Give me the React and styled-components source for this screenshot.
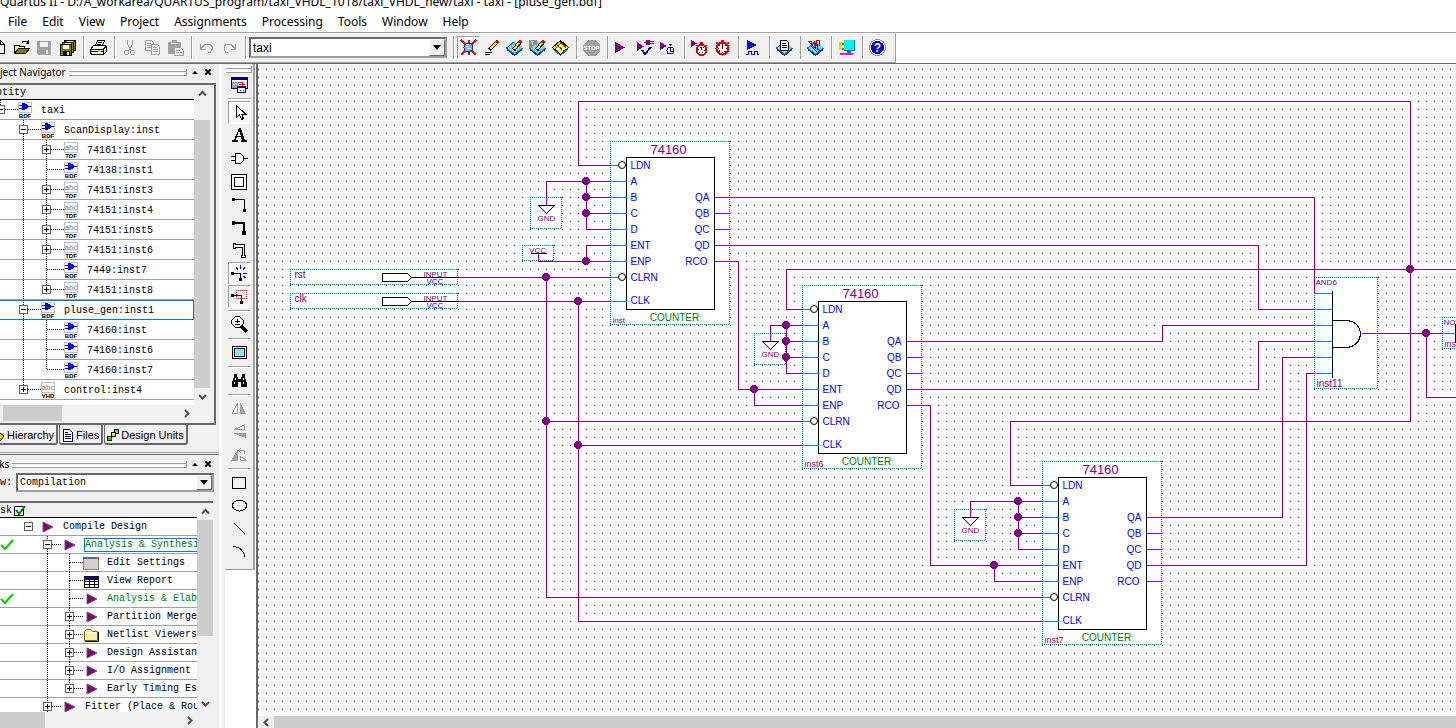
import React from "react";
import styled, { createGlobalStyle, css } from "styled-components";

const GlobalStyle = createGlobalStyle`
  * { box-sizing: border-box; }
  html, body { margin: 0; height: 100%; overflow: hidden; }
  body { background: #fff; color: #000; }
`;

const face = "#f0f0f0";
const shade = "#a0a0a0";
const dark = "#696969";
const thumb = "#cdcdcd";
const wire = "#800080";
const uiFont = '"Noto Sans", "Open Sans", sans-serif';
const arial = '"Liberation Sans", Arial, sans-serif';
const mono = '"Liberation Mono", "Courier New", monospace';

/* The window hangs over the left edge of the screen. */
const Window = styled.div`
  display: flex;
  flex-direction: column;
  height: 100vh;
  width: calc(100% + 24px);
  margin-left: -24px;
  overflow: hidden;
  font: 12px/16px ${uiFont};
`;

const TitleBar = styled.header`
  display: flex;
  align-items: flex-end;
  flex: none;
  height: 9px;
  padding-left: 24px;
  overflow: hidden;
  line-height: 14px;
  white-space: nowrap;
`;

const MenuBar = styled.nav`
  display: flex;
  align-items: center;
  flex: none;
  gap: 1px;
  height: 23px;
  padding: 2px 0 0 9px;
`;

const MenuMark = styled.span`
  width: 15px;
  height: 14px;
  border: 2px solid #000;
`;

const MenuItem = styled.button`
  border: 0;
  padding: 0 7px;
  background: none;
  font: 12px/20px ${uiFont};
  color: #000;
`;

const ToolStrip = styled.div`
  flex: none;
  height: 32px;
  border-top: 1px solid ${shade};
  border-bottom: 1px solid ${dark};
  background: #fff;
`;

const ToolBar = styled.div`
  display: inline-flex;
  align-items: center;
  height: 30px;
  padding: 1px 6px 2px 11px;
  background: ${face};
  border-top: 1px solid #fff;
  border-right: 1px solid ${shade};
  border-bottom: 1px solid ${shade};
  vertical-align: top;
`;

const ToolButton = styled.button`
  display: flex;
  align-items: center;
  justify-content: center;
  flex: none;
  width: 23px;
  height: 23px;
  padding: 0;
  border: 1px solid transparent;
  background: none;
  ${(p) =>
    p.$pressed &&
    css`
      border-color: ${shade} #fff #fff ${shade};
      background: #f8f8f8;
    `}
`;

const ToolSeparator = styled.span`
  flex: none;
  width: 2px;
  height: 23px;
  margin: 0 2px 0 4px;
  background: linear-gradient(90deg, ${shade} 50%, #fff 50%);
`;

const ComboFrame = styled.div`
  display: flex;
  flex: ${(p) => (p.$grow ? "1" : "none")};
  width: ${(p) => (p.$grow ? "auto" : "198px")};
  height: ${(p) => (p.$grow ? "19px" : "21px")};
  margin-right: ${(p) => (p.$grow ? "0" : "2px")};
  border: 2px solid;
  border-color: ${dark} ${shade} ${shade} ${dark};
  background: #fff;
`;

const ComboSelect = styled.select`
  flex: 1;
  min-width: 0;
  appearance: none;
  border: 0;
  padding: 0 0 0 2px;
  background: #fff;
  color: #000;
  font: ${(p) => (p.$mono ? `10px ${mono}` : `12px ${arial}`)};
`;

const ComboArrow = styled.span`
  display: flex;
  align-items: center;
  justify-content: center;
  flex: none;
  width: 16px;
  background: ${face};
  border: 1px solid;
  border-color: #fff ${dark} ${dark} #fff;
`;

const Body = styled.main`
  display: flex;
  flex: 1;
  min-height: 0;
`;

const Dock = styled.aside`
  display: flex;
  flex-direction: column;
  flex: none;
  width: 243px;
  background: ${face};
  overflow: hidden;
`;

const DockPanel = styled.section`
  display: flex;
  flex-direction: column;
  flex: ${(p) => (p.$grow ? "1" : "none")};
  min-height: 0;
`;

const PanelTitle = styled.div`
  display: flex;
  align-items: center;
  flex: none;
  height: 17px;
  padding: 0 6px 1px 8px;
  gap: 3px;
  font: 10px/16px ${uiFont};
  white-space: nowrap;
`;

const Grip = styled.span`
  flex: 1;
  height: 7px;
  border: solid ${shade};
  border-width: 0 1px 1px 0;
  background: linear-gradient(#fff 2px, ${shade} 2px, ${shade} 3px, ${face} 3px, ${face} 4px, #fff 4px);
`;

const TitleButton = styled.button`
  display: flex;
  align-items: center;
  justify-content: center;
  width: 10px;
  height: 12px;
  padding: 0;
  border: 0;
  background: none;
`;

const NavFrame = styled.div`
  flex: none;
  margin: 2px 3px 0 0;
  padding: 0 4px 1px 0;
  background: ${face};
  border: solid ${dark};
  border-width: 2px 2px 2px 0;
`;

const TaskFrame = styled.div`
  display: flex;
  flex-direction: column;
  flex: 1;
  min-height: 0;
  margin: 9px 6px 0 0;
  border-top: 2px solid ${dark};
`;

const ListArea = styled.div`
  display: flex;
  flex: ${(p) => (p.$grow ? "1" : "none")};
  min-height: 0;
`;

const List = styled.div`
  flex: 1;
  min-width: 0;
  overflow: hidden;
  background: #fff;
  padding-bottom: ${(p) => (p.$pad ? "5px" : "0")};
  font: 10px/14px ${mono};
`;

const ListHeader = styled.div`
  display: flex;
  align-items: center;
  gap: 2px;
  height: 15px;
  padding: 1px 0 0 ${(p) => p.$indent}px;
  background: ${face};
  border-bottom: 1px solid #000;
`;

const Row = styled.div`
  display: flex;
  align-items: center;
  height: ${(p) => p.$height}px;
  padding-left: ${(p) => (p.$flush ? "0" : "13px")};
  border-bottom: 1px solid ${shade};
  white-space: nowrap;
  ${(p) =>
    p.$selected &&
    css`
      outline: 1px solid #0078d7;
      outline-offset: -1px;
      border-bottom-color: #0078d7;
    `}
`;

const StatusCell = styled.span`
  display: flex;
  justify-content: flex-end;
  flex: none;
  width: 38px;
`;

const Expander = styled.button`
  display: block;
  flex: none;
  padding: 0;
  border: 0;
  background: none;
`;

const Guide = styled.svg`
  display: block;
  flex: none;
`;

const RowIcon = styled.svg`
  display: block;
  flex: none;
`;

const RowLabel = styled.span`
  margin-left: ${(p) => p.$gap}px;
  padding-top: ${(p) => (p.$low ? "2px" : "0")};
  color: ${(p) => (p.$done ? "#008000" : "#000")};
  ${(p) =>
    p.$focused &&
    css`
      outline: 1px solid #0078d7;
      line-height: 12px;
    `}
`;

const VScroll = styled.div`
  display: flex;
  flex-direction: column;
  flex: none;
  width: 16px;
  background: ${face};
`;

const HScroll = styled.div`
  display: flex;
  flex: none;
  height: ${(p) => p.$height}px;
  background: ${face};
`;

const ScrollButton = styled.button`
  display: flex;
  align-items: center;
  justify-content: center;
  flex: none;
  width: 16px;
  height: 17px;
  max-height: 100%;
  padding: 0;
  border: 0;
  background: none;
`;

const ScrollTrack = styled.div`
  display: flex;
  flex: 1;
  flex-direction: ${(p) => (p.$vertical ? "column" : "row")};
`;

const ScrollThumb = styled.div`
  flex: ${(p) => (p.$size ? `0 0 ${p.$size}` : "1")};
  margin: ${(p) => p.$margin || "0"};
  background: ${thumb};
`;

const Tabs = styled.div`
  display: flex;
  flex: none;
  gap: 1px;
  height: 20px;
  padding-left: 10px;
`;

const Tab = styled.button`
  display: flex;
  align-items: center;
  gap: 2px;
  padding: 2px 2px 0;
  background: ${face};
  border: solid ${dark};
  border-width: 0 2px 2px 1px;
  border-radius: 0 0 3px 3px;
  font: 11px/14px ${arial};
  color: #000;
  white-space: nowrap;
`;

const DockSplit = styled.div`
  flex: none;
  height: 3px;
  margin: 7px 0 1px;
  border-top: 1px solid ${shade};
  border-bottom: 1px solid ${dark};
`;

const FlowRow = styled.label`
  display: flex;
  align-items: center;
  flex: none;
  gap: 4px;
  padding: 0 5px 0 6px;
  font: 10px/14px ${mono};
`;

const PaletteColumn = styled.aside`
  display: flex;
  flex: none;
  flex-direction: column;
  align-items: flex-end;
  width: 37px;
  padding-right: 1px;
  border-left: 3px solid #fff;
  background: linear-gradient(90deg, ${face} 3px, #fff 3px);
`;

const Palette = styled.div`
  display: flex;
  flex-direction: column;
  align-items: center;
  width: 30px;
  padding: 2px 1px 6px;
  background: ${face};
  border-right: 2px solid ${shade};
  border-bottom: 1px solid ${shade};
`;

const PaletteGrip = styled(Grip)`
  flex: none;
  align-self: stretch;
`;

const PaletteSeparator = styled.span`
  flex: none;
  width: 23px;
  height: 5px;
  border: solid ${face};
  border-width: 2px 0 1px;
  background: linear-gradient(${shade} 50%, #fff 50%);
`;

const Editor = styled.section`
  display: flex;
  flex-direction: column;
  flex: 1;
  min-width: 0;
  border-left: 2px solid ${dark};
  background: #fff;
`;

const Sheet = styled.svg`
  display: block;
  flex: 1;
  min-height: 0;
  width: 100%;
`;

const PinText = styled.text`
  font: ${(p) => p.$size}px ${arial};
  fill: ${(p) => p.$color};
  text-anchor: ${(p) => p.$anchor || "start"};
`;

/* ---------- icons, all on a 17 x 17 grid ---------- */

const Chip = () => (
  <>
    <path d="M8.500 2L17 9l-8.500 7.500L0 9z" fill="#60d0f8" />
    <path d="M8.500 2.500l-8 6.500l8 6.500l8-6.500" fill="none" stroke="#0078c8" />
    <path d="M1 10.500l7.500 6l7.500-6" fill="none" stroke="#003070" />
    <path d="M4 8.500h1M6 10.500h1M8 12.500h1M10 10.500h1M12 8.500h1M6 6.500h1M10 6.500h1M8 8.500h1M2 9.500h1M4 10.500h1M6 12.500h1M10 12.500h1" stroke="#fff" />
  </>
);
const Pencil = () => (
  <>
    <path d="M7.500 11l7-8.500" stroke="#000" strokeWidth="4" />
    <path d="M8 10l5.500-6.500" stroke="#ffe800" strokeWidth="2" />
    <path d="M13 4l2-2.500" stroke="#f00000" strokeWidth="3" />
  </>
);
const Watch = ({ cx, cy, r, color }) => (
  <>
    <path d={`M${cx} ${cy - r - 2}v2M${cx - 1.5} ${cy - r - 2}h3M${cx - r} ${cy - r}l1 1M${cx + r} ${cy - r}l-1 1`} stroke={color} strokeWidth="2" />
    <circle cx={cx} cy={cy} r={r} fill="#fff" stroke={color} strokeWidth="2" />
    <circle cx={cx} cy={cy} r={r - 2} fill="none" stroke="#000" strokeDasharray="1 2" />
    <path d={`M${cx} ${cy - r + 2}v${r - 2}`} fill="none" stroke="#000" />
  </>
);

const icons = {
  new: <path d="M4.500 1.500h6l4 4v9h-10zM10.500 1.500v4h4" fill="#fff" stroke="#000" />,
  open: (
    <>
      <path d="M1.500 14v-8h4l1 1h5v3" fill="#ffff90" stroke="#000" />
      <path d="M1.500 14.500l4-5h11l-4 5z" fill="#808000" stroke="#000" />
      <path d="M9 3.500l2-1.500h3l1 2M15.500 1v4M12.500 4.500h3" fill="none" stroke="#000" />
    </>
  ),
  save: (
    <>
      <path d="M1 2h14v14H2l-1-1z" fill={shade} />
      <path d="M4 3h8v5H4zM10 11h2v4h-2z" fill={face} />
      <path d="M15.500 3v13.500H2" fill="none" stroke="#fff" />
    </>
  ),
  saveAll: (
    <>
      <path d="M5.500 1.500h11v10h-11z" fill="#808000" stroke="#000" />
      <path d="M7.500 2h6v3h-6z" fill="#fff" />
      <path d="M3.500 3.500h11v10h-11z" fill="#808000" stroke="#000" />
      <path d="M5.500 4h6v3h-6z" fill="#fff" />
      <path d="M1.500 5.500h11v11h-11z" fill="#808000" stroke="#000" />
      <path d="M4 6h6v4H4z" fill="#fff" />
      <path d="M4 12h7v4H4z" fill="#000" />
      <path d="M8 13h2v3H8z" fill="#fff" />
    </>
  ),
  print: (
    <>
      <path d="M5.500 6.500l2-5h7l-2 5" fill="#fff" stroke="#000" />
      <path d="M8 3.500h4M7 5.500h4" stroke="#000" />
      <path d="M3.500 6.500h11l2 1v5l-3 3h-11l-2-1v-4z" fill="#fff" stroke="#000" />
      <path d="M1 10.500h12l3-3M13.500 10v5M1 12.500h12" fill="none" stroke="#000" />
      <path d="M8 12h3" stroke="#e0e000" strokeWidth="2" />
    </>
  ),
  cut: (
    <g fill="none" stroke={shade} strokeWidth="1">
      <path d="M6.500 1v4l4 7M11.500 1v4l-4 7" />
      <circle cx="5.500" cy="13.500" r="2" />
      <circle cx="11.500" cy="13.500" r="2" />
    </g>
  ),
  copy: (
    <g fill={face} stroke={shade}>
      <path d="M1.500 1.500h6l2 2v8h-8zM3 4.500h4M3 6.500h4M3 8.500h4" />
      <path d="M7.500 5.500h6l2 2v8h-8zM9 8.500h4M9 10.500h5M9 12.500h5" />
    </g>
  ),
  paste: (
    <>
      <path d="M1 3h4V1h5v2h4v12H1z" fill={shade} />
      <path d="M4 4.500h7" stroke={face} />
      <path d="M7.500 8.500h6l3 3v5h-9zM9 11.500h4M9 13.500h6" fill={face} stroke={shade} />
    </>
  ),
  undo: <path d="M2.500 5v5h5M3 9.500l4-4h5l2 2v3l-2 3h-2" fill="none" stroke={shade} />,
  redo: <path d="M14.500 5v5h-5M14 9.500l-4-4h-5l-2 2v3l2 3h2" fill="none" stroke={shade} />,
  settings: (
    <>
      <path d="M1 1l15 15M16 1L1 16M8.500 1v4M8.500 12v4" stroke="#f00" strokeWidth="2" />
      <circle cx="8.500" cy="8.500" r="4.500" fill="#60b8f0" stroke="#003080" />
      <path d="M6 7.500h3M7 9.500h4M6 5.500h3" stroke="#c8f4ff" />
    </>
  ),
  edit: (
    <>
      <path d="M6 11l8-8" stroke="#000" strokeWidth="4" />
      <path d="M7 10l6-6" stroke="#ffe800" strokeWidth="2" />
      <path d="M13 4l2-2" stroke="#e00000" strokeWidth="3" />
      <path d="M2 13.500h7M2 15.500h5" stroke="#000" />
    </>
  ),
  chipEdit: (<><Chip /><Pencil /></>),
  chipPins: (<><Chip /><path d="M0 1h8v5H4v3H0z" fill="#909090" /><path d="M2 2.500h3M3.500 2v4" stroke="#e0e0e0" /><Pencil /></>),
  chipPlan: (
    <>
      <path d="M8.500 1.500l8 7l-8 7l-8-7z" fill="#ffee00" stroke="#000" />
      <path d="M4.500 5.500l8 7M8 2.500l6 6M3 10l7-7" stroke="#404000" />
      <path d="M7 6h3v2H7zM4 9h3v2H4zM10 9h3v2h-3z" fill="#fff" />
      <path d="M1 10l7.500 6.500l7.500-6.500" fill="none" stroke="#0078c8" />
    </>
  ),
  stop: (
    <>
      <path d="M5 1h7l5 5v6l-5 5H5l-5-5V6z" fill={shade} />
      <text x="8.500" y="11" textAnchor="middle" fontSize="6" fontFamily="Liberation Sans" fontWeight="bold" fill="#fff">STOP</text>
    </>
  ),
  play: <path d="M1 3v11l10-5.500z" fill={wire} />,
  playCheck: (
    <>
      <path d="M0 3v9l7-4.500zM7 3h2V1h4v1h4v1h-4v1h4v1h-4v1H9V4H7z" fill={wire} />
      <path d="M5 11l3 4l6-7" fill="none" stroke="#000080" strokeWidth="2" />
    </>
  ),
  playClock: (
    <>
      <path d="M0 3v8l7-4z" fill={wire} />
      <path d="M10.500 5v2M9 5.500h3" stroke="#000080" />
      <circle cx="10.500" cy="11.500" r="3.500" fill="#fff" stroke="#000080" />
      <path d="M10.500 9v3h2" fill="none" stroke="#000080" />
    </>
  ),
  timeRun: (<><Watch cx={10.5} cy={11} r={5} color="#e00000" /><path d="M0 1v7l6-3.500z" fill={wire} /></>),
  time: <Watch cx={8.5} cy={9.5} r={6} color="#e00000" />,
  simulate: (
    <>
      <path d="M2 1v10l10-5z" fill="#0000ff" />
      <path d="M1 15.500h2.500v-3h3v3h3v-3h3v3H14" fill="none" stroke="#0000ff" />
    </>
  ),
  report: (<><Chip /><path d="M4.500 1.500h6l2 2v8h-8z" fill="#fff" stroke="#000" /><path d="M6 4.500h4M6 6.500h5M6 8.500h5" stroke="#000" /></>),
  wave: (<><Chip /><path d="M1 2.500h3v5M7 1.500v5h2v-5h3v5" fill="none" stroke="#d00000" /><path d="M2 3l6 6v-5M4 7l6 6M10 5v5l4 2" fill="none" stroke="#0000c0" /></>),
  programmer: (
    <>
      <path d="M4 4.500h3M4 9.500h3" stroke="#808000" strokeWidth="2" />
      <path d="M1 3h3v8H1z" fill="#e8d800" />
      <path d="M6 1h10v10H6z" fill="#00f0f8" />
      <path d="M16.500 1v10.500H6" fill="none" stroke="#008080" />
      <path d="M9 11h4v3H9z" fill="#008080" />
      <path d="M2 14h13v2H2z" fill="#ff00ff" />
    </>
  ),
  help: (
    <>
      <circle cx="8.500" cy="8.500" r="8" fill="#fff" stroke="#909090" />
      <circle cx="8.500" cy="8.500" r="6.500" fill="#0000d0" />
      <text x="8.500" y="13" textAnchor="middle" fontSize="12" fontFamily="Liberation Sans" fontWeight="bold" fill="#fff">?</text>
    </>
  ),
  detach: (
    <>
      <path d="M.5 1.500h16v11H.5z" fill="#fff" stroke="#000080" />
      <path d="M1 2.500h15" stroke="#000080" strokeWidth="2" />
      <path d="M1 6h6v6H1z" fill={shade} />
      <path d="M2 8.500h2M5 8.500h1" stroke="#fff" />
      <path d="M7 6.500h4v4M8 8.500h6M11 10.500h1" fill="none" stroke="#f00" />
      <path d="M6.500 10.500h8v6h-8z" fill="#fff" stroke="#000080" />
      <path d="M7 11.500h7M9 14.500h1M12 14.500h1" stroke="#000080" />
    </>
  ),
  select: <path d="M5.500 1.500v12l3-3l2 5l2-1l-2-4.500h4z" fill="#fff" stroke="#000" />,
  text: <path d="M8 1h2l4 12h2v2h-6v-2h1l-1-3H6l-1 3h2v2H1v-2h2zM8 4l-2 5h4z" fill="#000" fillRule="evenodd" />,
  gate: <path d="M4.500 3.500h5l3 3v4l-3 3h-5zM0 6.500h4M0 10.500h4M13 8.500h4" fill="#fff" stroke="#000" />,
  block: <path d="M.5 1.500h15v15H.5zM3.500 4.500h9v9h-9z" fill="#fff" stroke="#000" />,
  node: (<><path d="M2 3.500h11.500V14" fill="none" stroke="#000" /><path d="M1 2h3v3H1zM12 13h3v3h-3z" /></>),
  bus: (<><path d="M2 3.500h11V14" fill="none" stroke="#000" strokeWidth="2" /><path d="M1 2h3v4H1zM11 12h4v4h-4z" /></>),
  conduit: <path d="M2.500 1.500h2v1h9v11h1v2h-4v-2h1v-8h-7v1h-2z" fill="#fff" stroke="#000" />,
  rubber: (
    <>
      <path d="M1 8.500h8.500V14" fill="none" stroke="#000" />
      <path d="M0 7h3v3H0zM8 13h3v3H8z" />
      <path d="M5 2l2 3M9.500 0v4M14 2l-2 3M12 8.500h4M12 11l3 2" stroke="#0000ff" fill="none" />
    </>
  ),
  partial: (
    <>
      <path d="M1 7.500h9.500V14" fill="none" stroke="#000" />
      <path d="M0 6h3v3H0zM9 13h3v3H9z" />
      <path d="M7 7.500h3.500V11" fill="none" stroke="#0000ff" />
      <path d="M5.500 2v9M5 2.500h11M15.500 2v9M5 10.500h11" fill="none" stroke="#f00" strokeDasharray="1 1" />
    </>
  ),
  zoom: (
    <>
      <path d="M4.500 .5h4l4 4v3l-4 4h-4l-4-4v-3z" fill="#fff" stroke="#000" />
      <path d="M6.500 3v4M4 5.500h5M4 8.500h5" stroke="#000" />
      <path d="M10 10l6 6" stroke="#000" strokeWidth="3" />
    </>
  ),
  fullScreen: (
    <>
      <rect x="1.500" y="2.500" width="14" height="12" rx="1" fill={face} stroke="#000" />
      <rect x="3.500" y="4.500" width="10" height="8" fill="#7fdce8" stroke="#000" />
      <path d="M4 5.500h9M4 7.500h9M4 9.500h9M4 11.500h9" stroke="#e8ffff" strokeDasharray="1 1" />
    </>
  ),
  find: (
    <>
      <path d="M3 2h3v3h1v2h3V5h1V2h3v3l2 6v4h-6v-5H7v5H1v-4l2-6z" fill="#000" />
      <path d="M4.500 6l-1.500 6M12.500 6v6" stroke="#fff" strokeDasharray="2 2" />
    </>
  ),
  flipH: (<><path d="M9 2v12h6z" fill={shade} /><path d="M6.500 3v10.500h-5z" fill="#fff" stroke={shade} /></>),
  flipV: (<><path d="M2 10h13v5z" fill={shade} /><path d="M13.500 2v4.500h-10z" fill="#fff" stroke={shade} /></>),
  rotate: (
    <>
      <path d="M7 3v12H0z" fill={shade} />
      <path d="M9.500 14.500v-4l6 4z" fill="#fff" stroke={shade} />
      <path d="M8 4.500h5l1 3M10 2L8 4.500L10 7" fill="none" stroke={shade} />
    </>
  ),
  rectangle: <rect x="1.500" y="3.500" width="13" height="11" fill="none" stroke="#000" />,
  oval: <ellipse cx="8.500" cy="8.500" rx="7" ry="5.500" fill="none" stroke="#000" />,
  line: <path d="M3 3l11 11" stroke="#000" />,
  arc: <path d="M2 3.500q9 0 12 10" fill="none" stroke="#000" />,
};

const Icon = ({ name }) => (
  <svg width="17" height="17" viewBox="0 0 17 17" shapeRendering="crispEdges" aria-hidden="true">
    {icons[name]}
  </svg>
);

const DownTriangle = () => (
  <svg width="8" height="5" viewBox="0 0 8 5" aria-hidden="true">
    <path d="M0 0h8L4 5z" fill="#000" />
  </svg>
);

const chevrons = { up: "M1 6.500L4.500 3L8 6.500", down: "M1 3L4.500 6.500L8 3", left: "M6 1L2.500 4.500L6 8", right: "M3 1L6.500 4.500L3 8" };
const Chevron = ({ dir }) => (
  <ScrollButton aria-label={`Scroll ${dir}`}>
    <svg width="9" height="9" viewBox="0 0 9 9" aria-hidden="true">
      <path d={chevrons[dir]} fill="none" stroke="#505050" strokeWidth="2" />
    </svg>
  </ScrollButton>
);

function Combo({ label, options, useMono, grow }) {
  return (
    <ComboFrame $grow={grow}>
      <ComboSelect aria-label={label} $mono={useMono} defaultValue={options[0]}>
        {options.map((o) => <option key={o}>{o}</option>)}
      </ComboSelect>
      <ComboArrow><DownTriangle /></ComboArrow>
    </ComboFrame>
  );
}

function ToolGroup({ names, pressed = [] }) {
  return names.map((n, i) =>
    n === "|" ? <ToolSeparator key={i} /> : (
      <ToolButton key={i} aria-label={n} $pressed={pressed.includes(n)}><Icon name={n} /></ToolButton>
    )
  );
}

function Title({ children }) {
  return (
    <PanelTitle>
      {children}
      <Grip />
      <TitleButton aria-label="Collapse">
        <svg width="6" height="3" viewBox="0 0 6 3"><path d="M0 3h6L3 0z" /></svg>
      </TitleButton>
      <TitleButton aria-label="Close">
        <svg width="6" height="6" viewBox="0 0 6 6"><path d="M0 0l6 6M6 0L0 6" stroke="#000" strokeWidth="2" /></svg>
      </TitleButton>
    </PanelTitle>
  );
}

/* One tree column: with "pass" a line runs through it, otherwise it stays empty. */
function Blank({ w, h, pass }) {
  return (
    <Guide width={w} height={h} shapeRendering="crispEdges" aria-hidden="true">
      {pass && <path d={`M11.500 0V${h}`} stroke="#000" strokeDasharray="1 1" />}
    </Guide>
  );
}

function Branch({ w, h, sign, up, down, root, label }) {
  const cx = root ? 14.5 : 11.5;
  const cy = Math.floor(h / 2) - 0.5;
  const art = (
    <Guide width={w} height={h} shapeRendering="crispEdges" aria-hidden="true">
      <g stroke="#000" strokeDasharray="1 1">
        {up && <path d={`M${cx} 0V${cy}`} />}
        {down && <path d={`M${cx} ${cy + 0.5}V${h}`} />}
        {!root && <path d={`M${cx + 0.5} ${cy}H${w}`} />}
      </g>
      {sign && (
        <>
          <rect x={cx - 4} y={cy - 4} width="8" height="8" fill="#fff" stroke="#606060" />
          <path d={`M${cx - 2.5} ${cy}h5${sign === "+" ? `M${cx} ${cy - 2.5}v5` : ""}`} stroke="#000" />
        </>
      )}
    </Guide>
  );
  return sign ? <Expander aria-label={`Toggle ${label}`}>{art}</Expander> : art;
}

function EntityIcon({ kind }) {
  return (
    <RowIcon width="14" height="19" viewBox="0 0 14 19" shapeRendering="crispEdges">
      <rect x=".5" y="2.500" width="13" height="10" fill="#fff" stroke="#c0c0c0" />
      {kind === "BDF" ? (
        <path d="M4 3h3v1h2v1h1v1h3v1h-3v1H9v1H7v1H4V9H1V8h3V6H1V5h3z" fill="#0000ff" />
      ) : (
        <text x="7" y="10" textAnchor="middle" fontSize="8" fontFamily="Liberation Sans" fill="#808080">abc</text>
      )}
      <text x="7" y="18" textAnchor="middle" fontSize="6" fontFamily="Liberation Sans" fontWeight="bold" fill="#000">{kind}</text>
    </RowIcon>
  );
}

const entities = [
  { level: 0, name: "taxi", kind: "BDF", sign: "-" },
  { level: 1, name: "ScanDisplay:inst", kind: "BDF", sign: "-" },
  { level: 2, name: "74161:inst", kind: "TDF", sign: "+" },
  { level: 2, name: "74138:inst1", kind: "BDF" },
  { level: 2, name: "74151:inst3", kind: "TDF", sign: "+" },
  { level: 2, name: "74151:inst4", kind: "TDF", sign: "+" },
  { level: 2, name: "74151:inst5", kind: "TDF", sign: "+" },
  { level: 2, name: "74151:inst6", kind: "TDF", sign: "+" },
  { level: 2, name: "7449:inst7", kind: "BDF" },
  { level: 2, name: "74151:inst8", kind: "TDF", sign: "+", last: true },
  { level: 1, name: "pluse_gen:inst1", kind: "BDF", sign: "-", selected: true },
  { level: 2, name: "74160:inst", kind: "BDF" },
  { level: 2, name: "74160:inst6", kind: "BDF" },
  { level: 2, name: "74160:inst7", kind: "BDF", last: true },
  { level: 1, name: "control:inst4", kind: "VHD", sign: "+", last: true },
];

function EntityRow({ item }) {
  return (
    <Row $height={20} $selected={item.selected}>
      {item.level > 0 && <Blank w={23} h={20} />}
      {item.level > 1 && <Blank w={23} h={20} pass />}
      <Branch w={29} h={20} sign={item.sign} up down={item.level > 0 && !item.last} label={item.name} />
      <EntityIcon kind={item.kind} />
      <RowLabel $gap={9} $low>{item.name}</RowLabel>
    </Row>
  );
}

const taskArt = {
  run: <path d="M4 3v10l10-5z" fill={wire} stroke="#606060" strokeWidth="1" />,
  form: (
    <>
      <path d="M.5 2.500h15v12H.5z" fill="#d4d0c8" stroke="#808080" />
      <path d="M0 2h16v2H0z" fill="#3a6ea5" /><path d="M12 2h3v2h-3z" fill="#f04020" />
    </>
  ),
  table: (
    <>
      <path d="M1 3h15v12H1z" fill="#000" />
      <path d="M2 4h4v2H2zM7 4h4v2H7zM12 4h3v2h-3z" fill="#0000c0" />
      <path d="M2 7h4v1H2zM7 7h4v1H7zM12 7h3v1h-3zM2 9h4v2H2zM7 9h4v2H7zM12 9h3v2h-3zM2 12h4v2H2zM7 12h4v2H7zM12 12h3v2h-3z" fill="#fff" />
    </>
  ),
  folder: (
    <>
      <path d="M1.500 13.500v-9l2-2h4l2 2h5v9z" fill="#ffefa0" stroke="#806000" />
      <path d="M2 14.500h13.500V5" fill="none" stroke="#000" />
      <path d="M3 6h10" stroke="#fffbe0" strokeWidth="2" />
    </>
  ),
};

const tasks = [
  { level: 0, name: "Compile Design", icon: "run", sign: "-" },
  { level: 1, name: "Analysis & Synthesis", icon: "run", sign: "-", done: true, focused: true },
  { level: 2, name: "Edit Settings", icon: "form" },
  { level: 2, name: "View Report", icon: "table" },
  { level: 2, name: "Analysis & Elaboration", icon: "run", done: true },
  { level: 2, name: "Partition Merge", icon: "run", sign: "+" },
  { level: 2, name: "Netlist Viewers", icon: "folder", sign: "+" },
  { level: 2, name: "Design Assistant", icon: "run", sign: "+" },
  { level: 2, name: "I/O Assignment", icon: "run", sign: "+" },
  { level: 2, name: "Early Timing Estimate", icon: "run", sign: "+", last: true },
  { level: 1, name: "Fitter (Place & Route)", icon: "run", sign: "+" },
];

function TaskRow({ item }) {
  return (
    <Row $height={18} $flush>
      <StatusCell>
        {item.done && (
          <svg width="14" height="12" viewBox="0 0 14 12"><path d="M1 6l4 4L13 1" fill="none" stroke="#00d000" strokeWidth="2" /></svg>
        )}
      </StatusCell>
      {item.level > 0 && <Blank w={22} h={18} />}
      {item.level > 1 && <Blank w={22} h={18} pass />}
      <Branch w={25} h={18} sign={item.sign} up={item.level > 0} down={item.level > 0 && !item.last} root={item.level === 0} label={item.name} />
      <RowIcon width="16" height="16" viewBox="0 0 16 16">{taskArt[item.icon]}</RowIcon>
      <RowLabel $gap={8} $done={item.done} $focused={item.focused}>{item.name}</RowLabel>
    </Row>
  );
}

/* ---------- schematic ---------- */

const inPins = [["LDN", 24], ["A", 40], ["B", 56], ["C", 72], ["D", 88], ["ENT", 104], ["ENP", 120], ["CLRN", 136], ["CLK", 160]];
const outPins = [["QA", 56], ["QB", 72], ["QC", 88], ["QD", 104], ["RCO", 120]];
const blue = "#0000ff";

/* Each side is its own path so that the dots fall on whole pixels. */
function Bounds({ w, h }) {
  return (
    <>
      <rect width={w} height={h} fill="#fff" />
      <path
        transform="translate(-.5 -.5)"
        d={`M0 .5H${w}M0 ${h + 0.5}H${w}M.5 0V${h}M${w + 0.5} 0V${h}`}
        stroke="#008080"
        strokeDasharray="1 1"
      />
    </>
  );
}

function Counter({ x, y, name }) {
  return (
    <g transform={`translate(${x} ${y})`}>
      <Bounds w={119} h={183} />
      <rect x="16" y="16" width="88" height="152" fill="#fff" stroke="#000" />
      {inPins.map(([n, py]) => {
        const inverted = n === "LDN" || n === "CLRN";
        return (
          <g key={n}>
            <path d={`M0 ${py}H${inverted ? 8 : 16}`} stroke="#0080ff" />
            {inverted && <circle cx="11.500" cy={py - 0.5} r="3.500" fill="#fff" stroke="#000" shapeRendering="auto" />}
            <PinText $size={10} $color={blue} x="20" y={n === "CLK" ? py + 2 : py + 3}>{n}</PinText>
          </g>
        );
      })}
      {outPins.map(([n, py]) => (
        <g key={n}>
          <path d={`M104 ${py}h16`} stroke="#8000ff" />
          <PinText $size={10} $color={blue} $anchor="end" x={n === "RCO" ? 97 : 99} y={py + 3}>{n}</PinText>
        </g>
      ))}
      <PinText $size={13} $color={wire} $anchor="middle" x="58" y="12">74160</PinText>
      <PinText $size={10} $color="#008000" $anchor="middle" x="64" y="179">COUNTER</PinText>
      <PinText $size={name === "inst" ? 8 : 9} $color={wire} x="2" y="181">{name}</PinText>
    </g>
  );
}

function Ground({ x, y }) {
  return (
    <g transform={`translate(${x} ${y})`}>
      <Bounds w={31} h={31} />
      <path d="M16 0v8" stroke="#8000ff" />
      <path d="M8 8h16l-8 8z" fill="#fff" stroke="#000" />
      <PinText $size={8} $color={wire} $anchor="middle" x="16" y="23">GND</PinText>
    </g>
  );
}

function InputPin({ y, name }) {
  return (
    <g transform={`translate(290 ${y})`}>
      <Bounds w={167} h={15} />
      <path d="M92 4h25l4 4l-4 4H92zM121 8h47" fill="#fff" stroke="#000" />
      <PinText $size={10} $color={wire} x="4" y="8">{name}</PinText>
      <PinText $size={8} $color={wire} x="133" y="7">INPUT</PinText>
      <PinText $size={8} $color={blue} x="136" y="14">VCC</PinText>
    </g>
  );
}

const wires = [
  "M610 165H578V101H1410V421H1010V485H1042",
  "M802 309H786V269H1460",
  "M546 197V181H610M610 229H586V181M586 197H610M586 213H610",
  "M770 333V325H802M802 373H786V325M786 341H802M786 357H802",
  "M970 509V501H1042M1042 549H1018V501M1018 517H1042M1018 533H1042",
  "M538 261H610M586 261V245H610",
  "M458 277H610M546 277V597H1042M546 421H802",
  "M458 301H610M578 301V621H1042M578 445H802",
  "M730 261H738V389H802M754 389V405H802",
  "M730 197H1314V293",
  "M730 245H1258V309H1314",
  "M922 341H1162V325H1314",
  "M922 389H1258V341H1314",
  "M922 405H930V565H1042M994 565V581H1042",
  "M1162 517H1282V357H1314",
  "M1162 565H1306V373H1314",
  "M1378 333H1442M1426 333V397H1460",
];

const junctions = [
  [586, 181], [586, 197], [586, 213], [586, 261], [546, 277], [578, 301], [546, 421], [578, 445],
  [786, 325], [786, 341], [786, 357], [754, 389], [994, 565], [1018, 501], [1018, 517], [1018, 533],
  [1410, 269], [1426, 333],
];

function Schematic() {
  return (
    <Sheet aria-label="pluse_gen.bdf">
      <defs>
        <pattern id="grid" width="8" height="8" patternUnits="userSpaceOnUse">
          <rect x="0" y="5" width="1" height="1" fill="#000" />
        </pattern>
      </defs>
      <rect width="100%" height="100%" fill="url(#grid)" />
      {/* scroll offset of the sheet inside the editor */}
      <g transform="translate(-257.500 -63.500)" fill="none" shapeRendering="crispEdges">
        <Counter x={610} y={141} name="inst" />
        <Counter x={802} y={285} name="inst6" />
        <Counter x={1042} y={461} name="inst7" />
        <Ground x={530} y={197} />
        <Ground x={754} y={333} />
        <Ground x={954} y={509} />
        <g transform="translate(522 245)">
          <Bounds w={31} h={15} />
          <path d="M8 8h16" stroke="#000" />
          <path d="M16 8v8" stroke="#8000ff" />
          <PinText $size={8} $color={wire} $anchor="middle" x="15" y="7">VCC</PinText>
        </g>
        <InputPin y={269} name="rst" />
        <InputPin y={293} name="clk" />
        <g transform="translate(1314 277)">
          <Bounds w={63} h={111} />
          <path d="M0 16h18M0 32h18M0 48h18M0 64h18M0 80h18M0 96h18" stroke="#0080ff" />
          <path d="M47 56h17" stroke="#8000ff" />
          <path d="M18 13v87M18 43h15q12 2 13 13q-1 12-13 14H18" stroke="#000" />
          <PinText $size={8} $color={wire} x="1" y="7">AND6</PinText>
          <PinText $size={10} $color={wire} x="2" y="109">inst11</PinText>
        </g>
        <g transform="translate(1442 317)">
          <Bounds w={47} h={31} />
          <path d="M0 16h12" stroke="#0080ff" />
          <path d="M13 7v18l16-9z" stroke="#000" />
          <PinText $size={8} $color={wire} x="1" y="7">NOT</PinText>
          <PinText $size={9} $color={wire} x="2" y="29">inst12</PinText>
        </g>
        <g stroke={wire}>{wires.map((d) => <path key={d} d={d} />)}</g>
        <g fill={wire}>{junctions.map(([x, y]) => <circle key={`${x}-${y}`} cx={x - 0.5} cy={y - 0.5} r="4" />)}</g>
      </g>
    </Sheet>
  );
}

const menus = ["File", "Edit", "View", "Project", "Assignments", "Processing", "Tools", "Window", "Help"];
const paletteTools = [
  "detach", "|", "select", "text", "gate", "block", "node", "bus", "conduit", "rubber", "partial", "|", "zoom", "|",
  "fullScreen", "|", "find", "|", "flipH", "flipV", "rotate", "|", "rectangle", "oval", "line", "arc",
];
const pressedTools = ["select", "rubber", "partial"];

export default function App() {
  return (
    <>
      <GlobalStyle />
      <Window>
        <TitleBar>Quartus II - D:/A_workarea/QUARTUS_program/taxi_VHDL_1018/taxi_VHDL_new/taxi - taxi - [pluse_gen.bdf]</TitleBar>
        <MenuBar>
          <MenuMark />
          {menus.map((m) => <MenuItem key={m}>{m}</MenuItem>)}
        </MenuBar>
        <ToolStrip>
          <ToolBar>
            <ToolGroup names={["new", "open", "save", "saveAll", "|", "print", "|", "cut", "copy", "paste", "|", "undo", "redo", "|"]} />
            <Combo label="Project" options={["taxi"]} />
            <ToolGroup
              names={["|", "settings", "edit", "chipEdit", "chipPins", "chipPlan", "|", "stop", "|", "play", "playCheck", "playClock", "|", "timeRun", "time", "|", "simulate", "|", "report", "|", "wave", "|", "programmer", "|", "help"]}
              pressed={["settings"]}
            />
          </ToolBar>
        </ToolStrip>
        <Body>
          <Dock>
            <DockPanel>
              <Title>Project Navigator</Title>
              <NavFrame>
                <ListArea>
                  <List $pad>
                    <ListHeader $indent={14}>Entity</ListHeader>
                    {entities.map((e) => <EntityRow key={`${e.level}${e.name}`} item={e} />)}
                  </List>
                  <VScroll>
                    <Chevron dir="up" />
                    <ScrollTrack $vertical><ScrollThumb $margin="18px 0 0" /></ScrollTrack>
                    <Chevron dir="down" />
                  </VScroll>
                </ListArea>
                <HScroll $height={17}>
                  <Chevron dir="left" />
                  <ScrollTrack><ScrollThumb $size="59px" $margin="0 0 1px 11px" /></ScrollTrack>
                  <Chevron dir="right" />
                  <VScroll />
                </HScroll>
              </NavFrame>
              <Tabs role="tablist">
                <Tab role="tab" aria-selected="true">
                  <svg width="16" height="14" viewBox="0 0 16 14"><path d="M3 7l4-5l4 3l4 3l-4 5l-5-2z" fill="#f0d800" stroke="#000" /></svg>
                  Hierarchy
                </Tab>
                <Tab role="tab" aria-selected="false">
                  <svg width="12" height="13" viewBox="0 0 12 13" shapeRendering="crispEdges">
                    <path d="M1.500 .5h6l3 3v9h-9z" fill="#fff" stroke="#000060" />
                    <path d="M3 3.500h3M3 5.500h6M3 7.500h6M3 9.500h6" stroke="#000060" />
                  </svg>
                  Files
                </Tab>
                <Tab role="tab" aria-selected="false">
                  <svg width="12" height="12" viewBox="0 0 12 12" shapeRendering="crispEdges">
                    <path d="M7.500 .5h4v4h-4z" fill="#00f0ff" stroke="#000" />
                    <path d="M4.500 3.500h4v4h-4z" fill="#ffee00" stroke="#000" />
                    <path d="M.5 7.500h4v4h-4z" fill="#00e000" stroke="#000" />
                  </svg>
                  Design Units
                </Tab>
              </Tabs>
            </DockPanel>
            <DockSplit />
            <DockPanel $grow>
              <Title>Tasks</Title>
              <FlowRow>
                Flow:
                <Combo label="Flow" options={["Compilation"]} useMono grow />
              </FlowRow>
              <TaskFrame>
                <ListArea $grow>
                  <List>
                    <ListHeader $indent={12}>
                      Task
                      <svg width="12" height="12" viewBox="0 0 12 12">
                        <path d="M.5 1.500h9v9h-9z" fill="#fff" stroke="#000" />
                        <path d="M2 5l3 4L11 1" fill="none" stroke="#008000" strokeWidth="2" />
                      </svg>
                    </ListHeader>
                    {tasks.map((t) => <TaskRow key={t.name} item={t} />)}
                  </List>
                  <VScroll>
                    <Chevron dir="up" />
                    <ScrollTrack $vertical><ScrollThumb $size="66%" /></ScrollTrack>
                    <Chevron dir="down" />
                  </VScroll>
                </ListArea>
                <HScroll $height={16}>
                  <Chevron dir="left" />
                  <ScrollTrack><ScrollThumb $size="53px" /></ScrollTrack>
                  <Chevron dir="right" />
                  <VScroll />
                </HScroll>
              </TaskFrame>
            </DockPanel>
          </Dock>
          <PaletteColumn>
            <Palette>
              <PaletteGrip />
              {paletteTools.map((n, i) =>
                n === "|" ? <PaletteSeparator key={i} /> : (
                  <ToolButton key={i} aria-label={n} $pressed={pressedTools.includes(n)}><Icon name={n} /></ToolButton>
                )
              )}
            </Palette>
          </PaletteColumn>
          <Editor>
            <Schematic />
            <HScroll $height={12}>
              <Chevron dir="left" />
              <ScrollTrack><ScrollThumb /></ScrollTrack>
            </HScroll>
          </Editor>
        </Body>
      </Window>
    </>
  );
}
